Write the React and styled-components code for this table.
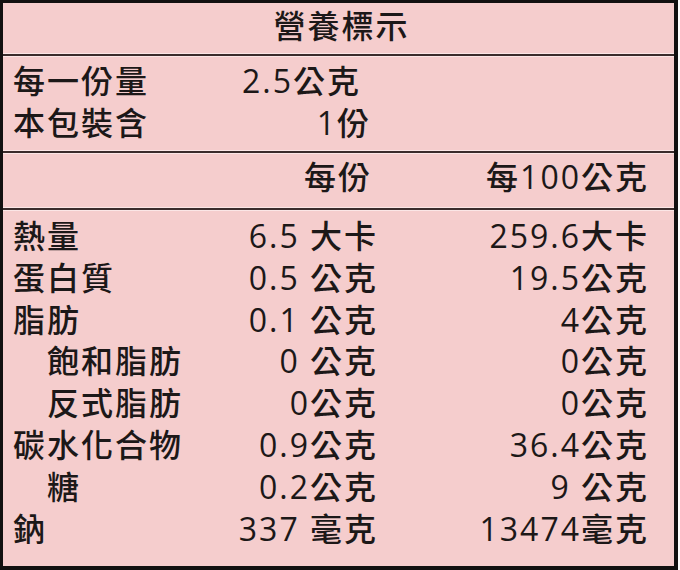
import React from "react";
import styled, { createGlobalStyle } from "styled-components";

const Global = createGlobalStyle`
  html, body { margin: 0; padding: 0; background: #ffffff; }
  body { font-family: "Open Sans", "Noto Sans CJK TC", sans-serif; }
`;

const Label = styled.div`
  box-sizing: border-box;
  width: 678px;
  height: 570px;
  background: #f5cdcd;
  border: 3px solid #121010;
  border-right-width: 4px;
  border-bottom-width: 4px;
  color: #1c1818;
  font-size: 32px;
  font-weight: 500;
  letter-spacing: 2px;
  display: flex;
  flex-direction: column;
`;

const Title = styled.div`
  box-sizing: border-box;
  height: 51px;
  display: flex;
  align-items: center;
  justify-content: center;
  line-height: 42px;
  padding: 0 0 6px 6px;
`;

const Divider = styled.div`
  height: 2px;
  background: #3b2c2c;
  box-shadow: 0 -1px 0 #fbe6e6, 0 1px 0 #fbe6e6;
`;

const Section = styled.div`
  display: flex;
  flex-direction: column;
  padding: ${(p) => p.$pad};
`;

const Row = styled.div`
  display: grid;
  grid-template-columns: ${(p) => p.$cols};
  height: ${(p) => p.$h || 42}px;
  line-height: ${(p) => p.$h || 42}px;
  padding-left: 10px;
  white-space: pre;
`;

const Name = styled.span`
  padding-left: ${(p) => (p.$indent ? 34 : 0)}px;
`;

const Value = styled.span`
  justify-self: end;
  margin-right: ${(p) => p.$shift || 0}px;
`;

const serving = [
  ["每一份量", "2.5公克", 11],
  ["本包裝含", "1份", 1],
];

const nutrients = [
  ["熱量", "6.5 大卡", "259.6大卡", false],
  ["蛋白質", "0.5 公克", "19.5公克", false],
  ["脂肪", "0.1 公克", "4公克", false],
  ["飽和脂肪", "0 公克", "0公克", true],
  ["反式脂肪", "0公克", "0公克", true],
  ["碳水化合物", "0.9公克", "36.4公克", false],
  ["糖", "0.2公克", "9 公克", true],
  ["鈉", "337 毫克", "13474毫克", false],
];

const COLS = "229px 136px 271px";

export default function App() {
  return (
    <>
      <Global />
      <Label>
        <Title>營養標示</Title>
        <Divider />
        <Section $pad="4px 0 7px">
          {serving.map(([n, v, s]) => (
            <Row key={n} $cols="219px 140px">
              <Name>{n}</Name>
              <Value $shift={s}>{v}</Value>
            </Row>
          ))}
        </Section>
        <Divider />
        <Section $pad="3px 0 10px">
          <Row $cols={COLS}>
            <span />
            <Value $shift={6}>每份</Value>
            <Value>每100公克</Value>
          </Row>
        </Section>
        <Divider />
        <Section $pad="5px 0 0">
          {nutrients.map(([n, a, b, indent]) => (
            <Row key={n} $cols={COLS} $h={41.8}>
              <Name $indent={indent}>{n}</Name>
              <Value>{a}</Value>
              <Value>{b}</Value>
            </Row>
          ))}
        </Section>
      </Label>
    </>
  );
}
